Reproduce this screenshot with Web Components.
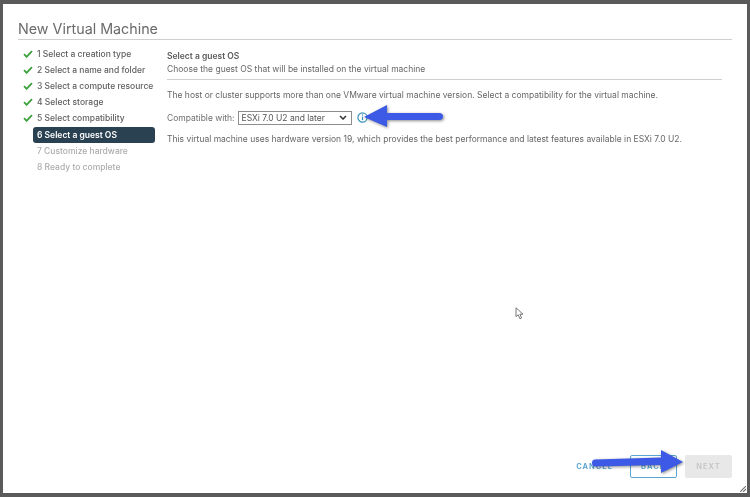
<!DOCTYPE html>
<html>
<head>
<meta charset="utf-8">
<style>
    html, body { margin: 0; height: 100%; }
    body { background: #5a5a5a; font-family: Inter, "Liberation Sans", sans-serif; color: #565656; overflow: hidden; }
</style>
</head>
<body>
<vm-dialog heading="New Virtual Machine">
    <wizard-nav slot="nav">
        <wizard-step state="done">1 Select a creation type</wizard-step>
        <wizard-step state="done">2 Select a name and folder</wizard-step>
        <wizard-step state="done">3 Select a compute resource</wizard-step>
        <wizard-step state="done">4 Select storage</wizard-step>
        <wizard-step state="done">5 Select compatibility</wizard-step>
        <wizard-step state="active">6 Select a guest OS</wizard-step>
        <wizard-step state="todo">7 Customize hardware</wizard-step>
        <wizard-step state="todo">8 Ready to complete</wizard-step>
    </wizard-nav>
    <guest-page slot="page"></guest-page>
    <wizard-footer slot="footer"></wizard-footer>
</vm-dialog>
<call-out x="364" y="105"></call-out>
<call-out x="592" y="450" flip></call-out>
<mouse-cursor></mouse-cursor>

<script>
    class VmDialog extends HTMLElement {
        constructor() {
            super();
            this.attachShadow({ mode: 'open' }).innerHTML = `
                <style>
                    :host { display: block; height: 100%; box-sizing: border-box; padding: 4px 3px 4px 3px; filter: blur(.35px); }
                    .box { position: relative; height: 100%; box-sizing: border-box; background: #fff; padding: 0 15px 0 15px; display: flex; flex-direction: column; }
                    h1 { margin: 0; height: 35.5px; box-sizing: border-box; padding-top: 14.5px; font: 400 14.3px/20px Inter, "Liberation Sans", sans-serif; color: #6a6a6a; border-bottom: 1px solid #cfcfcf; }
                    .main { flex: 1; display: flex; min-height: 0; }
                    .nav { width: 137px; flex: none; padding-top: 6px; }
                    .page { flex: 1; padding: 0 10px 0 12px; }
                    .grip { position: absolute; right: 1px; bottom: 1px; }
                </style>
                <div class="box">
                    <h1>${this.getAttribute('heading')}</h1>
                    <div class="main">
                        <div class="nav"><slot name="nav"></slot></div>
                        <div class="page"><slot name="page"></slot></div>
                    </div>
                    <slot name="footer"></slot>
                    <svg class="grip" width="6" height="6" viewBox="0 0 6 6"><path d="M0 6 6 0M3 6 6 3" stroke="#777" stroke-width="1.2"/></svg>
                </div>`;
        }
    }

    class WizardNav extends HTMLElement {
        constructor() {
            super();
            this.attachShadow({ mode: 'open' }).innerHTML = `
                <style>:host { display: flex; flex-direction: column; gap: 0; }</style>
                <slot></slot>`;
        }
    }

    class WizardStep extends HTMLElement {
        constructor() {
            super();
            let state = this.getAttribute('state');
            let check = state == 'done'
                ? '<svg width="10" height="8" viewBox="0 0 10 8"><path d="M1 4.2 3.6 6.8 9 1.2" fill="none" stroke="#3ea23e" stroke-width="1.9"/></svg>'
                : '';
            this.attachShadow({ mode: 'open' }).innerHTML = `
                <style>
                    :host { display: flex; align-items: center; height: 16.2px; font: 500 8.5px/16px Inter, "Liberation Sans", sans-serif; white-space: nowrap; }
                    .tick { width: 15px; flex: none; display: flex; align-items: center; padding-left: 5px; box-sizing: border-box; }
                    .label { flex: 1; height: 16px; line-height: 16px; padding-left: 4px; border-radius: 3px; color: #5e5e5e; }
                    :host([state=active]) .label { background: #2a4152; color: #fff; font-weight: 600; }
                    :host([state=todo]) .label { color: #acacac; }
                </style>
                <span class="tick">${check}</span>
                <span class="label"><slot></slot></span>`;
        }
    }

    class GuestPage extends HTMLElement {
        constructor() {
            super();
            this.attachShadow({ mode: 'open' }).innerHTML = `
                <style>
                    :host { display: block; font: 400 8.5px/12px Inter, "Liberation Sans", sans-serif; color: #666; white-space: nowrap; }
                    .head { padding-top: 10px; padding-bottom: 4px; border-bottom: 1px solid #cfcfcf; }
                    .head b { display: block; font-weight: 600; height: 13px; color: #5a5a5a; }
                    p { margin: 0; }
                    .intro { padding-top: 9px; }
                    .row { display: flex; align-items: center; gap: 3px; height: 16px; margin-top: 9px; color: #6e6e6e; }
                    .sel { width: 114px; height: 14px; box-sizing: border-box; border: 1px solid #8d8d8d; display: flex; align-items: center; justify-content: space-between; padding: 0 4px 0 3px; color: #555; }
                    .row svg.info { margin-left: 2px; }
                    .note { padding-top: 7px; }
                </style>
                <div class="head"><b>Select a guest OS</b>Choose the guest OS that will be installed on the virtual machine</div>
                <p class="intro">The host or cluster supports more than one VMware virtual machine version. Select a compatibility for the virtual machine.</p>
                <div class="row">
                    <span>Compatible with:</span>
                    <span class="sel">ESXi 7.0 U2 and later
                        <svg width="8" height="5" viewBox="0 0 8 5"><path d="M1 1 4 4 7 1" fill="none" stroke="#333" stroke-width="1.5"/></svg>
                    </span>
                    <svg class="info" width="11" height="11" viewBox="0 0 11 11"><circle cx="5.5" cy="5.5" r="4.6" fill="none" stroke="#3d93b8" stroke-width="1.2"/><path d="M5.5 4.6V8.2" stroke="#3d93b8" stroke-width="1.3"/><circle cx="5.5" cy="3" r=".8" fill="#3d93b8"/></svg>
                </div>
                <p class="note">This virtual machine uses hardware version 19, which provides the best performance and latest features available in ESXi 7.0 U2.</p>`;
        }
    }

    class WizardFooter extends HTMLElement {
        constructor() {
            super();
            this.attachShadow({ mode: 'open' }).innerHTML = `
                <style>
                    :host { display: flex; justify-content: flex-end; align-items: center; gap: 8px; padding-bottom: 15px; font: 600 7.5px/1 Inter, "Liberation Sans", sans-serif; letter-spacing: 1px; }
                    .btn { width: 47px; height: 23px; box-sizing: border-box; display: flex; align-items: center; justify-content: center; border-radius: 2px; padding-top: 1px; }
                    .cancel { width: auto; color: #4f9fcb; margin-right: 9px; }
                    .back { color: #4f9fcb; border: 1px solid #5aa6d2; }
                    .next { color: #c4c4c4; background: #e8e8e8; }
                </style>
                <span class="btn cancel">CANCEL</span>
                <span class="btn back">BACK</span>
                <span class="btn next">NEXT</span>`;
        }
    }

    // annotation drawn on top of the screenshot, x/y is the free canvas position
    class CallOut extends HTMLElement {
        constructor() {
            super();
            let d = this.hasAttribute('flip')
                ? 'M0 13 Q0 9.5 3 9.5 L69 7.5 L69 0 L91 12 L69 23 L69 15 L3 16.5 Q0 16.5 0 13Z'
                : 'M79 11.5 Q79 8 75 8 L23 8 L23 0 L0 12 L23 22 L23 15 L75 15 Q79 15 79 11.5Z';
            this.attachShadow({ mode: 'open' }).innerHTML = `
                <style>
                    :host { position: absolute; left: ${this.getAttribute('x')}px; top: ${this.getAttribute('y')}px; display: block; line-height: 0; filter: drop-shadow(1px 1.5px 1.5px rgba(0,0,0,.45)) blur(.3px); }
                </style>
                <svg width="92" height="24" viewBox="0 0 92 24"><path d="${d}" fill="#3c5ae6"/></svg>`;
        }
    }

    class MouseCursor extends HTMLElement {
        constructor() {
            super();
            this.attachShadow({ mode: 'open' }).innerHTML = `
                <style>:host { position: absolute; left: 515px; top: 307px; display: block; line-height: 0; filter: blur(.3px); }</style>
                <svg width="10" height="13" viewBox="0 0 10 13"><path d="M1 .8V9.6L3.2 7.8 5 11.8 6.6 11 4.9 7.2H8Z" fill="#fff" stroke="#666" stroke-width=".9"/></svg>`;
        }
    }

    window.customElements.define('vm-dialog', VmDialog);
    window.customElements.define('wizard-nav', WizardNav);
    window.customElements.define('wizard-step', WizardStep);
    window.customElements.define('guest-page', GuestPage);
    window.customElements.define('wizard-footer', WizardFooter);
    window.customElements.define('call-out', CallOut);
    window.customElements.define('mouse-cursor', MouseCursor);
</script>
</body>
</html>
